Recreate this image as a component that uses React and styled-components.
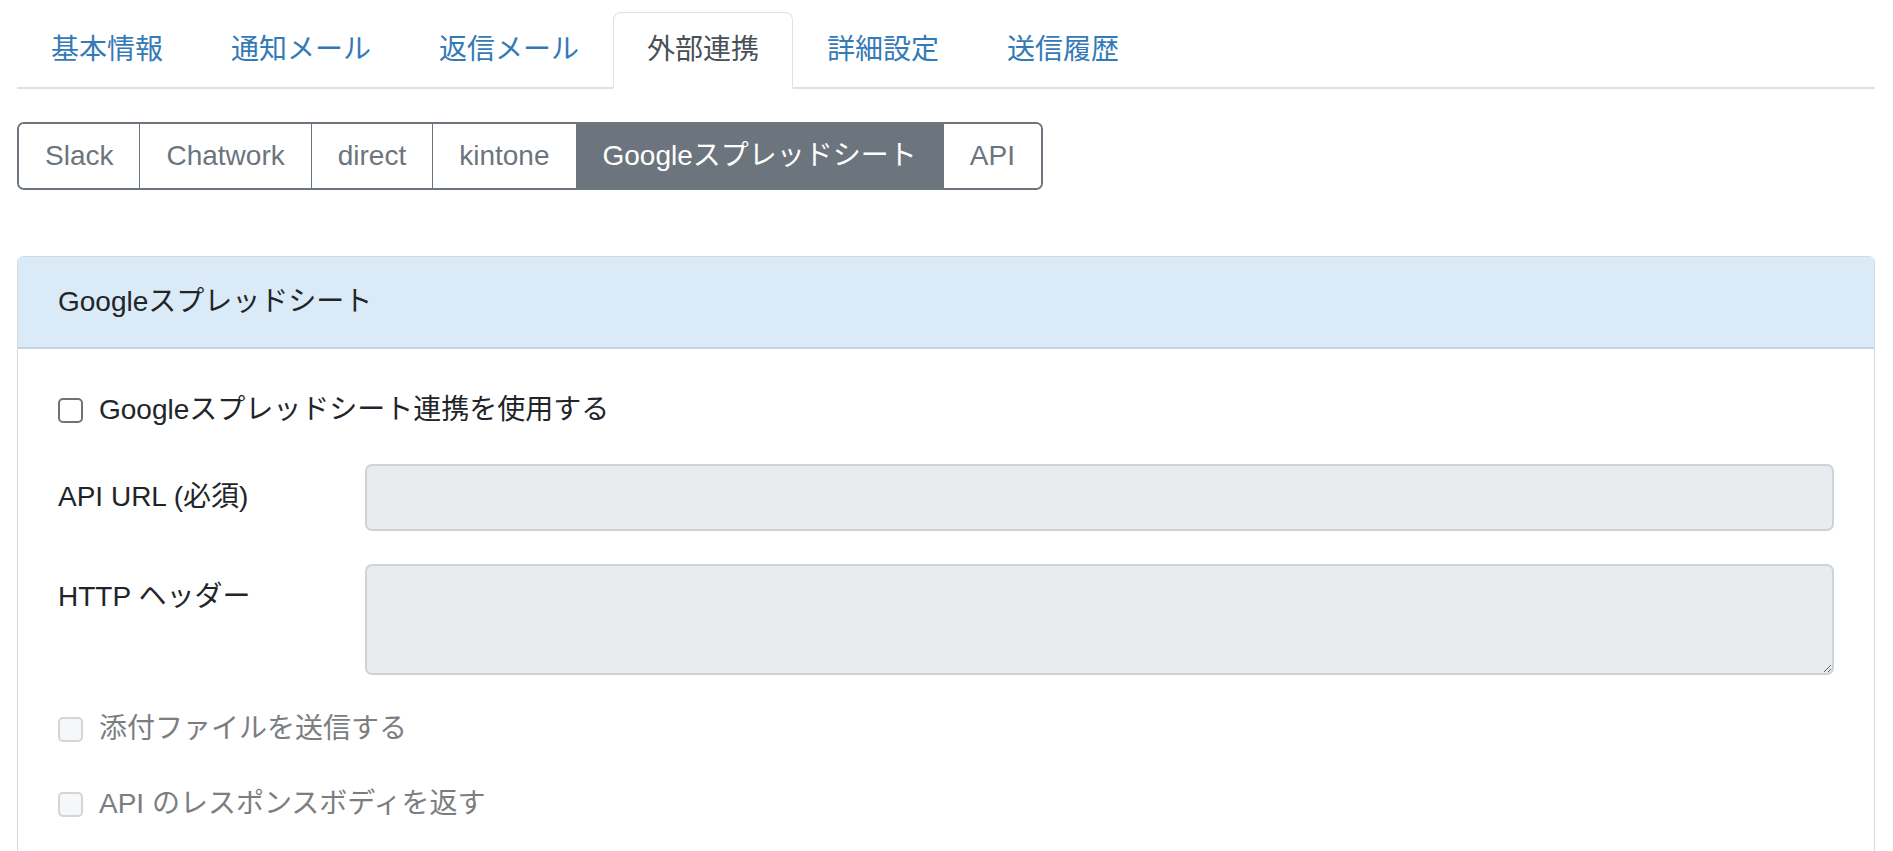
import React, { useState } from "react";
import styled, { createGlobalStyle } from "styled-components";

const GlobalStyle = createGlobalStyle`
  html, body {
    margin: 0;
    padding: 0;
    background: #fff;
  }
  body {
    font-family: "Liberation Sans", "Noto Sans CJK JP", sans-serif;
    font-size: 28px;
    line-height: 1.5;
    color: #212529;
  }
  * {
    box-sizing: border-box;
  }
`;

const tabs = ["基本情報", "通知メール", "返信メール", "外部連携", "詳細設定", "送信履歴"];
const services = ["Slack", "Chatwork", "direct", "kintone", "Googleスプレッドシート", "API"];

function App() {
  const [tab, setTab] = useState("外部連携");
  const [service, setService] = useState("Googleスプレッドシート");
  const [enabled, setEnabled] = useState(false);

  return (
    <Page>
      <GlobalStyle />
      <Nav>
        {tabs.map((t) => (
          <Tab key={t} active={t === tab} onClick={() => setTab(t)}>
            {t}
          </Tab>
        ))}
      </Nav>

      <ButtonGroup>
        {services.map((s) => (
          <GroupButton key={s} active={s === service} onClick={() => setService(s)}>
            {s}
          </GroupButton>
        ))}
      </ButtonGroup>

      <Panel>
        <PanelHeader>Googleスプレッドシート</PanelHeader>
        <PanelBody>
          <Check>
            <Box type="checkbox" checked={enabled} onChange={(e) => setEnabled(e.target.checked)} />
            <span>Googleスプレッドシート連携を使用する</span>
          </Check>

          <FieldRow>
            <FieldLabel>API URL (必須)</FieldLabel>
            <Input type="text" disabled={!enabled} />
          </FieldRow>

          <FieldRow>
            <FieldLabel>HTTP ヘッダー</FieldLabel>
            <TextArea readOnly={!enabled} />
          </FieldRow>

          <Check disabled={!enabled}>
            <Box type="checkbox" disabled={!enabled} />
            <span>添付ファイルを送信する</span>
          </Check>

          <Check disabled={!enabled}>
            <Box type="checkbox" disabled={!enabled} />
            <span>API のレスポンスボディを返す</span>
          </Check>
        </PanelBody>
      </Panel>
    </Page>
  );
}

export default App;

const Page = styled.div`
  padding: 12px 18px 40px 17px;
`;

const Nav = styled.div`
  display: flex;
  border-bottom: 2px solid #dee2e6;
`;

const Tab = styled.div`
  padding: 16px 33px;
  margin-bottom: -2px;
  border: 1px solid ${(p) => (p.active ? "#dee2e6" : "transparent")};
  border-bottom: 2px solid ${(p) => (p.active ? "#fff" : "transparent")};
  border-radius: 8px 8px 0 0;
  background: ${(p) => (p.active ? "#fff" : "transparent")};
  color: ${(p) => (p.active ? "#495057" : "#337ab7")};
  cursor: pointer;
`;

const ButtonGroup = styled.div`
  display: inline-flex;
  margin-top: 33px;
  border: 2px solid #6c757d;
  border-radius: 7px;
  overflow: hidden;
`;

const GroupButton = styled.button`
  font: inherit;
  padding: 11px 26px;
  border: none;
  border-left: 1.5px solid #6c757d;
  background: ${(p) => (p.active ? "#6c757d" : "#fff")};
  color: ${(p) => (p.active ? "#fff" : "#6c757d")};
  cursor: pointer;
  &:first-child {
    border-left: none;
  }
`;

const Panel = styled.div`
  margin-top: 66px;
  border: 1px solid #d5dadf;
  border-radius: 6px;
  overflow: hidden;
`;

const PanelHeader = styled.div`
  padding: 24px 40px;
  background: #dbeaf7;
  border-bottom: 2px solid #c4d3df;
  color: #212529;
`;

const PanelBody = styled.div`
  display: flex;
  flex-direction: column;
  gap: 33px;
  padding: 40px 40px 40px 40px;
`;

const Check = styled.label`
  display: flex;
  align-items: center;
  gap: 16px;
  color: ${(p) => (p.disabled ? "#7b7e81" : "#212529")};
`;

const Box = styled.input`
  appearance: none;
  margin: 0;
  width: 25px;
  height: 25px;
  border-radius: 5px;
  border: 2px solid #707275;
  background: #fff;
  flex-shrink: 0;
  &:disabled {
    border-color: #d3d5d8;
    background: #f6f7f8;
  }
  &:checked {
    background: #0d6efd;
    border-color: #0d6efd;
  }
`;

const FieldRow = styled.div`
  display: grid;
  grid-template-columns: 307px 1fr;
  align-items: start;
`;

const FieldLabel = styled.div`
  padding-top: 12px;
`;

const Input = styled.input`
  font: inherit;
  height: 67px;
  padding: 12px 20px;
  border: 2px solid #cfd3d7;
  border-radius: 7px;
  background: #e9ecef;
  &:enabled {
    background: #fff;
  }
`;

const TextArea = styled.textarea`
  font: inherit;
  height: 111px;
  padding: 12px 20px;
  border: 2px solid #cfd3d7;
  border-radius: 7px;
  background: ${(p) => (p.readOnly ? "#e9ecef" : "#fff")};
  resize: vertical;
  outline: none;
`;
